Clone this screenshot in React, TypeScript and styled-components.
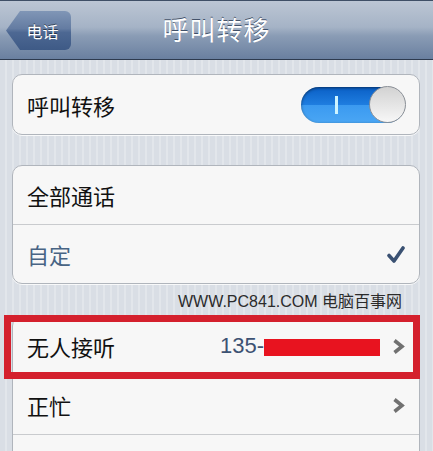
import React from "react";
import styled, { createGlobalStyle } from "styled-components";

const Global = createGlobalStyle`
  html, body { margin: 0; padding: 0; }
  body {
    width: 433px;
    height: 451px;
    overflow: hidden;
    font-family: "Noto Sans CJK SC", "Liberation Sans", sans-serif;
    background-color: #dde2e8;
    background-image: repeating-linear-gradient(90deg, #d9dee5 0 5px, #e2e6eb 5px 7px);
  }
`;

const Page = styled.div`
  position: relative;
  width: 433px;
  height: 451px;
  overflow: hidden;
`;

const NavBar = styled.div`
  height: 58px;
  border-top: 1px solid #3f4f66;
  border-bottom: 1px solid #2e3b4f;
  background: linear-gradient(#bcc6d4 0%, #a5b3c6 45%, #8a9cb5 60%, #6a80a0 100%);
  display: flex;
  align-items: center;
  position: relative;
`;

const BackButton = styled.div`
  position: absolute;
  left: 6px;
  top: 10px;
  width: 65px;
  height: 39px;
  display: flex;
  align-items: center;
  justify-content: center;
  padding-left: 8px;
  box-sizing: border-box;
  color: #fff;
  font-size: 16px;
  text-shadow: 0 -1px 0 rgba(0, 0, 0, 0.5);
  background: linear-gradient(#8096b6 0%, #647ca2 45%, #4d6893 55%, #3e5a86 100%);
  clip-path: polygon(14px 0, 100% 0, 100% 100%, 14px 100%, 0 50%);
  border-radius: 6px;
`;

const Title = styled.div`
  flex: 1;
  text-align: center;
  color: #fff;
  font-size: 26px;
  line-height: 1;
  letter-spacing: 1px;
  text-shadow: 0 -1px 0 rgba(40, 55, 80, 0.8);
  margin-top: -2px;
`;

const Content = styled.div`
  padding: 14px 13px 0 12px;
  display: flex;
  flex-direction: column;
`;

const Group = styled.div<{ $mt?: number }>`
  margin-top: ${(p) => p.$mt ?? 0}px;
  background: #f7f7f7;
  border: 1px solid #b0b5bc;
  border-radius: 10px;
  box-shadow: 0 1px 0 rgba(255, 255, 255, 0.8);
  overflow: hidden;
`;

const Row = styled.div<{ $h?: number }>`
  height: ${(p) => p.$h ?? 58}px;
  display: flex;
  align-items: center;
  padding: 0 14px 0 14px;
  & + & {
    border-top: 1px solid #c9cbce;
  }
`;

const Label = styled.div<{ $blue?: boolean }>`
  font-size: 22px;
  color: ${(p) => (p.$blue ? "#486484" : "#111")};
  flex: 1;
  line-height: 1;
`;

const Value = styled.div`
  font-family: "Liberation Sans", "Noto Sans", sans-serif;
  font-size: 22px;
  color: #3d5273;
  display: flex;
  align-items: center;
  margin-right: 12px;
`;

const Redacted = styled.div`
  width: 116px;
  height: 17px;
  background: #e8131f;
  margin-top: 2px;
`;

const Switch = styled.div`
  width: 104px;
  height: 36px;
  border-radius: 18px;
  background: linear-gradient(#0a5fc6 0%, #1f7ee0 50%, #3b9af0 51%, #4aa6f4 100%);
  box-shadow: inset 0 1px 3px rgba(0, 0, 0, 0.5);
  display: flex;
  align-items: center;
  position: relative;
`;

const OnMark = styled.div`
  width: 3px;
  height: 18px;
  background: #cdf4ff;
  margin-left: 34px;
`;

const Knob = styled.div`
  position: absolute;
  right: -1px;
  top: -1px;
  width: 37px;
  height: 37px;
  border-radius: 50%;
  background: linear-gradient(#d2d2d2, #f7f7f7);
  border: 1px solid #8a8f96;
  box-sizing: border-box;
`;

const Watermark = styled.div`
  height: 32px;
  display: flex;
  align-items: center;
  justify-content: flex-end;
  padding-right: 18px;
  font-family: "Liberation Sans", "Noto Sans CJK SC", sans-serif;
  font-size: 16px;
  color: #2b2b2b;
`;

const Highlight = styled.div`
  position: absolute;
  left: 4px;
  top: 315px;
  width: 416px;
  height: 64px;
  border: 7px solid #d4202d;
  box-sizing: border-box;
  pointer-events: none;
`;

const Check = () => (
  <svg width="18" height="19" viewBox="0 0 18 19">
    <path d="M2 10.5 L7 16 L16 3" fill="none" stroke="#3a5172" strokeWidth="3.6" strokeLinecap="round" strokeLinejoin="round" />
  </svg>
);

const Chevron = () => (
  <svg width="13" height="15" viewBox="0 0 13 15">
    <path d="M2.5 1.5 L10 7.5 L2.5 13.5" fill="none" stroke="#717171" strokeWidth="3.6" />
  </svg>
);

export default function App() {
  return (
    <Page>
      <Global />
      <NavBar>
        <BackButton>电话</BackButton>
        <Title>呼叫转移</Title>
      </NavBar>
      <Content>
        <Group>
          <Row $h={59}>
            <Label>呼叫转移</Label>
            <Switch>
              <OnMark />
              <Knob />
            </Switch>
          </Row>
        </Group>
        <Group $mt={30}>
          <Row>
            <Label>全部通话</Label>
          </Row>
          <Row>
            <Label $blue>自定</Label>
            <Check />
          </Row>
        </Group>
        <Watermark>WWW.PC841.COM 电脑百事网</Watermark>
        <Group>
          <Row>
            <Label>无人接听</Label>
            <Value>
              135-
              <Redacted />
            </Value>
            <Chevron />
          </Row>
          <Row>
            <Label>正忙</Label>
            <Chevron />
          </Row>
          <Row />
        </Group>
      </Content>
      <Highlight />
    </Page>
  );
}
